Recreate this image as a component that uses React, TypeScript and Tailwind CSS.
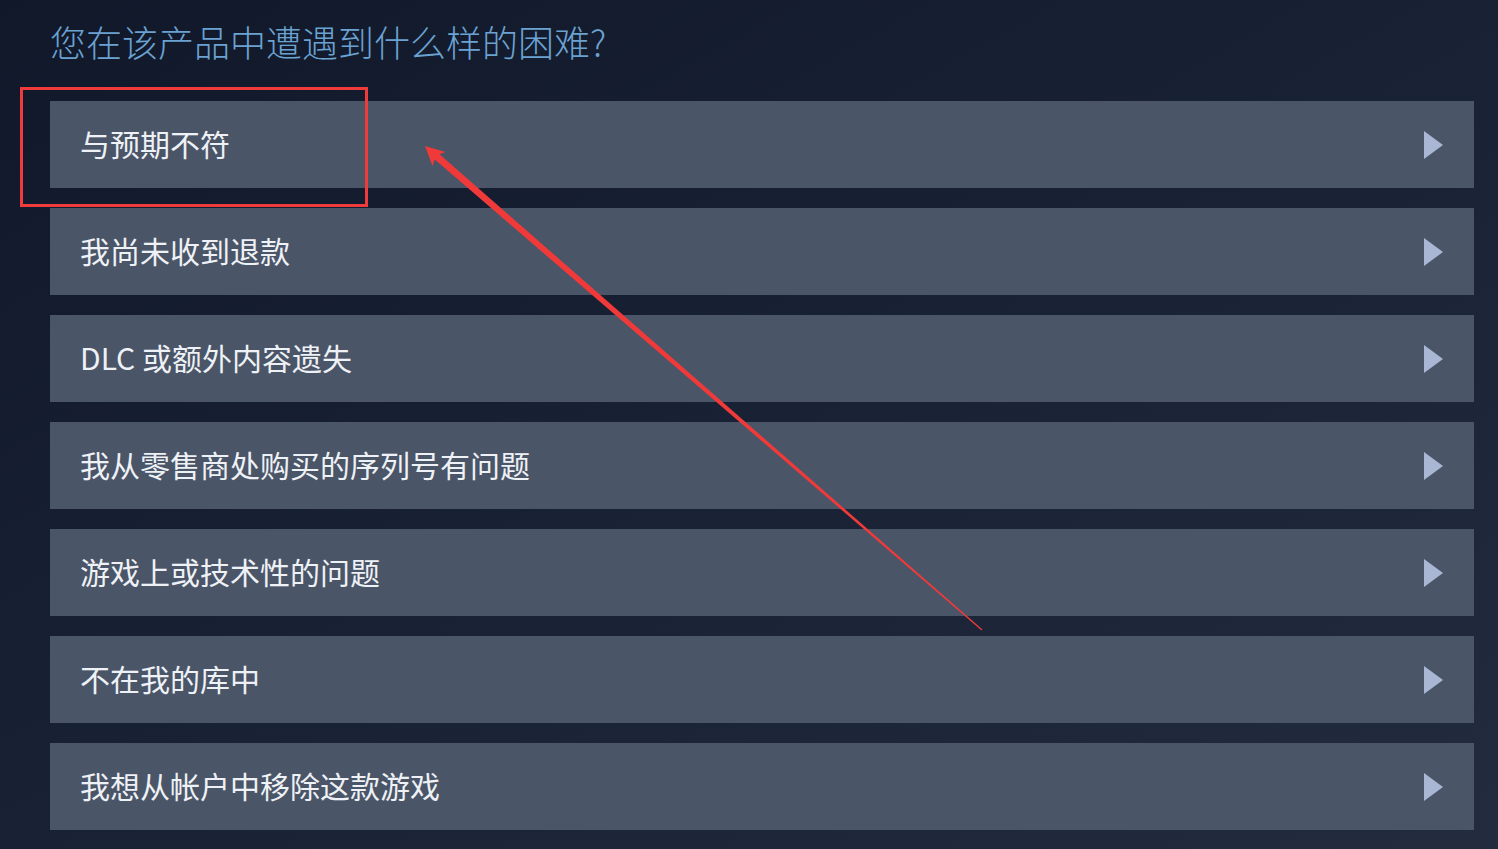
const items = [
  "与预期不符",
  "我尚未收到退款",
  "DLC 或额外内容遗失",
  "我从零售商处购买的序列号有问题",
  "游戏上或技术性的问题",
  "不在我的库中",
  "我想从帐户中移除这款游戏",
];

function Row({ label }: { label: string }) {
  return (
    <div className="flex h-[87px] items-center justify-between bg-[#4a5568] pl-[30px] pr-[31px]">
      <span className="pb-[4px] text-[30px] leading-none text-[#eef1f5]">{label}</span>
      <svg width="19" height="28" viewBox="0 0 19 28" className="shrink-0">
        <polygon points="0,0 19,14 0,28" fill="#a9b7d4" />
      </svg>
    </div>
  );
}

export default function App() {
  return (
    <div
      className="relative h-[849px] w-full overflow-hidden bg-gradient-to-br from-[#10182a] to-[#222c3e] pl-[50px] pr-[24px] pt-[21px]"
      style={{ fontFamily: '"Noto Sans CJK SC", "Noto Sans", sans-serif' }}
    >
      <h1 className="mb-[40px] text-[36px] font-light leading-[40px] text-[#6ba2d2]">
        您在该产品中遭遇到什么样的困难?
      </h1>
      <div className="flex flex-col gap-[20px]">
        {items.map((label) => (
          <Row key={label} label={label} />
        ))}
      </div>

      {/* annotation overlay */}
      <div className="pointer-events-none absolute left-[20px] top-[87px] h-[120px] w-[348px] border-[3px] border-[#ef3b3b]" />
      <svg
        className="pointer-events-none absolute left-0 top-0"
        width="1498"
        height="849"
        viewBox="0 0 1498 849"
      >
        <polygon
          points="425,146 445.5,152 439.5,154.2 982.4,629.5 981.6,630.5 434.8,159.5 432.5,166"
          fill="#f03a3a"
        />
      </svg>
    </div>
  );
}
